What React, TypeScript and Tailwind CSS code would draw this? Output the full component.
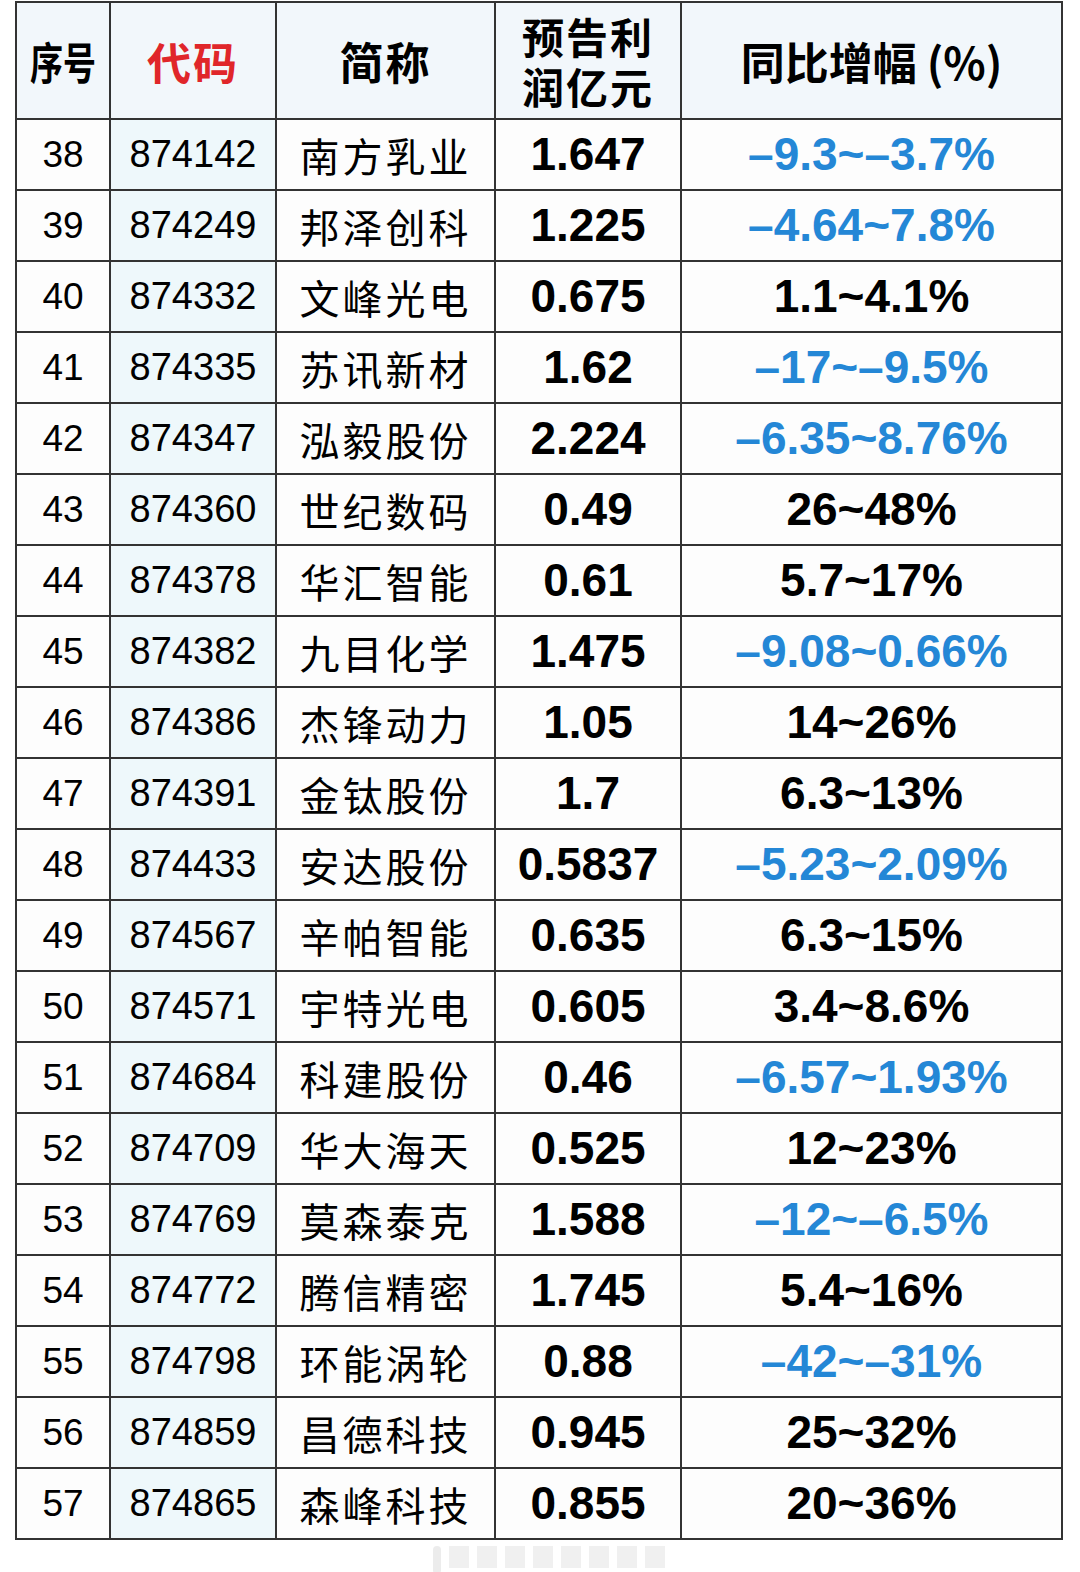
const rows: [number, string, string, string, string][] = [
  [38, "874142", "南方乳业", "1.647", "–9.3~–3.7%"],
  [39, "874249", "邦泽创科", "1.225", "–4.64~7.8%"],
  [40, "874332", "文峰光电", "0.675", "1.1~4.1%"],
  [41, "874335", "苏讯新材", "1.62", "–17~–9.5%"],
  [42, "874347", "泓毅股份", "2.224", "–6.35~8.76%"],
  [43, "874360", "世纪数码", "0.49", "26~48%"],
  [44, "874378", "华汇智能", "0.61", "5.7~17%"],
  [45, "874382", "九目化学", "1.475", "–9.08~0.66%"],
  [46, "874386", "杰锋动力", "1.05", "14~26%"],
  [47, "874391", "金钛股份", "1.7", "6.3~13%"],
  [48, "874433", "安达股份", "0.5837", "–5.23~2.09%"],
  [49, "874567", "辛帕智能", "0.635", "6.3~15%"],
  [50, "874571", "宇特光电", "0.605", "3.4~8.6%"],
  [51, "874684", "科建股份", "0.46", "–6.57~1.93%"],
  [52, "874709", "华大海天", "0.525", "12~23%"],
  [53, "874769", "莫森泰克", "1.588", "–12~–6.5%"],
  [54, "874772", "腾信精密", "1.745", "5.4~16%"],
  [55, "874798", "环能涡轮", "0.88", "–42~–31%"],
  [56, "874859", "昌德科技", "0.945", "25~32%"],
  [57, "874865", "森峰科技", "0.855", "20~36%"],
];

const cjk = "font-['Noto_Sans_CJK_SC',sans-serif]";
const latin = "font-['Liberation_Sans','Noto_Sans_CJK_SC',sans-serif]";

export default function App() {
  return (
    <div className="w-[1080px] h-[1572px] bg-white pt-px pl-[15px]">
      <table className="w-[1046px] border-collapse table-fixed text-black">
        <colgroup>
          <col className="w-[94px]" />
          <col className="w-[166px]" />
          <col className="w-[219px]" />
          <col className="w-[186px]" />
          <col className="w-[381px]" />
        </colgroup>
        <thead>
          <tr className={`h-[117px] bg-[#f2f7fb] ${cjk} font-bold text-[44px] leading-[50px]`}>
            <th className="border-2 border-[#333] p-0">
              <span className="inline-block scale-x-75">序号</span>
            </th>
            <th className="border-2 border-[#333] p-0 text-[#e0262a] tracking-[2px]">代码</th>
            <th className="border-2 border-[#333] p-0 tracking-[2px]">简称</th>
            <th className="border-2 border-[#333] p-0">
              <div className="flex flex-col items-center text-[42px] leading-[50px] tracking-[2px]">
                <span>预告利</span>
                <span>润亿元</span>
              </div>
            </th>
            <th className="border-2 border-[#333] p-0">同比增幅 (%)</th>
          </tr>
        </thead>
        <tbody>
          {rows.map(([no, code, name, profit, growth]) => (
            <tr key={no} className="h-[70.9px] text-center">
              <td className={`border-2 border-[#333] p-0 bg-[#fdfdfd] ${latin} text-[37px]`}>{no}</td>
              <td className={`border-2 border-[#333] p-0 bg-[#eef8fb] ${latin} text-[38px]`}>{code}</td>
              <td className={`border-2 border-[#333] p-0 bg-[#fdfdfd] ${cjk} text-[40px] tracking-[3px]`}>{name}</td>
              <td className={`border-2 border-[#333] p-0 bg-[#fdfdfd] ${latin} font-bold text-[46px]`}>{profit}</td>
              <td
                className={`border-2 border-[#333] p-0 bg-[#fdfdfd] ${latin} font-bold text-[46px] ${
                  growth.startsWith("–") ? "text-[#2487d6]" : "text-black"
                }`}
              >
                {growth}
              </td>
            </tr>
          ))}
        </tbody>
      </table>
      {/* faint watermark strip */}
      <div className="flex gap-[8px] ml-[418px] mt-[6px]">
        <div className="w-[8px] h-[28px] bg-[#ececec] rounded-sm" />
        <div className="w-[20px] h-[22px] bg-[#f0f0f0]" />
        <div className="w-[20px] h-[22px] bg-[#f0f0f0]" />
        <div className="w-[20px] h-[22px] bg-[#f0f0f0]" />
        <div className="w-[20px] h-[22px] bg-[#f0f0f0]" />
        <div className="w-[20px] h-[22px] bg-[#f0f0f0]" />
        <div className="w-[20px] h-[22px] bg-[#f0f0f0]" />
        <div className="w-[20px] h-[22px] bg-[#f0f0f0]" />
        <div className="w-[20px] h-[22px] bg-[#f0f0f0]" />
      </div>
    </div>
  );
}
